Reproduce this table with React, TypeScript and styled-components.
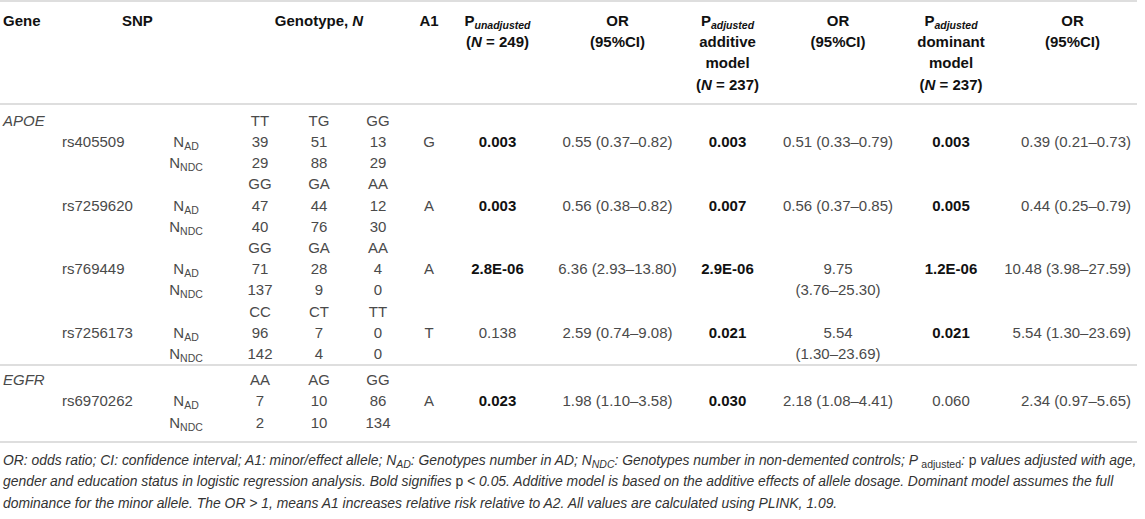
import { Fragment } from "react";
import { createGlobalStyle, styled } from "styled-components";

interface PValue {
  value: string;
  bold: boolean;
}

interface Block {
  gene?: string;
  snp: string;
  genotypes: [string, string, string];
  ad: [string, string, string];
  ndc: [string, string, string];
  a1: string;
  pUnadjusted: PValue;
  orUnadjusted: string;
  pAdditive: PValue;
  orAdditive: string[];
  pDominant: PValue;
  orDominant: string;
}

const GROUPS: Block[][] = [
  [
    {
      gene: "APOE",
      snp: "rs405509",
      genotypes: ["TT", "TG", "GG"],
      ad: ["39", "51", "13"],
      ndc: ["29", "88", "29"],
      a1: "G",
      pUnadjusted: { value: "0.003", bold: true },
      orUnadjusted: "0.55 (0.37–0.82)",
      pAdditive: { value: "0.003", bold: true },
      orAdditive: ["0.51 (0.33–0.79)"],
      pDominant: { value: "0.003", bold: true },
      orDominant: "0.39 (0.21–0.73)",
    },
    {
      snp: "rs7259620",
      genotypes: ["GG", "GA", "AA"],
      ad: ["47", "44", "12"],
      ndc: ["40", "76", "30"],
      a1: "A",
      pUnadjusted: { value: "0.003", bold: true },
      orUnadjusted: "0.56 (0.38–0.82)",
      pAdditive: { value: "0.007", bold: true },
      orAdditive: ["0.56 (0.37–0.85)"],
      pDominant: { value: "0.005", bold: true },
      orDominant: "0.44 (0.25–0.79)",
    },
    {
      snp: "rs769449",
      genotypes: ["GG", "GA", "AA"],
      ad: ["71", "28", "4"],
      ndc: ["137", "9", "0"],
      a1: "A",
      pUnadjusted: { value: "2.8E-06", bold: true },
      orUnadjusted: "6.36 (2.93–13.80)",
      pAdditive: { value: "2.9E-06", bold: true },
      orAdditive: ["9.75", "(3.76–25.30)"],
      pDominant: { value: "1.2E-06", bold: true },
      orDominant: "10.48 (3.98–27.59)",
    },
    {
      snp: "rs7256173",
      genotypes: ["CC", "CT", "TT"],
      ad: ["96", "7", "0"],
      ndc: ["142", "4", "0"],
      a1: "T",
      pUnadjusted: { value: "0.138", bold: false },
      orUnadjusted: "2.59 (0.74–9.08)",
      pAdditive: { value: "0.021", bold: true },
      orAdditive: ["5.54", "(1.30–23.69)"],
      pDominant: { value: "0.021", bold: true },
      orDominant: "5.54 (1.30–23.69)",
    },
  ],
  [
    {
      gene: "EGFR",
      snp: "rs6970262",
      genotypes: ["AA", "AG", "GG"],
      ad: ["7", "10", "86"],
      ndc: ["2", "10", "134"],
      a1: "A",
      pUnadjusted: { value: "0.023", bold: true },
      orUnadjusted: "1.98 (1.10–3.58)",
      pAdditive: { value: "0.030", bold: true },
      orAdditive: ["2.18 (1.08–4.41)"],
      pDominant: { value: "0.060", bold: false },
      orDominant: "2.34 (0.97–5.65)",
    },
  ],
];

const COLUMNS = [58, 84, 88, 60, 58, 60, 42, 95, 145, 75, 146, 80, 146];

const GlobalStyle = createGlobalStyle`
  body {
    margin: 0;
    background: #ffffff;
  }
`;

const Page = styled.div`
  width: 1145px;
  font-family: "Liberation Sans", Arial, Helvetica, sans-serif;
  color: #4a4a4a;
`;

const Table = styled.table`
  width: 1137px;
  border-collapse: collapse;
  table-layout: fixed;
  font-size: 15px;
  line-height: 21.2px;
  border-top: 2px solid #dedede;
  border-bottom: 2px solid #dedede;
`;

const Col = styled.col<{ $width: number }>`
  width: ${(p) => p.$width}px;
`;

const Head = styled.thead`
  border-bottom: 2px solid #dedede;
`;

const HeadCell = styled.th<{ $align?: string; $indent?: number }>`
  padding: 8px 3px 8px ${(p) => p.$indent ?? 3}px;
  text-align: ${(p) => p.$align ?? "center"};
  vertical-align: top;
  font-weight: 700;
  color: #111111;
  white-space: nowrap;
`;

const Group = styled.tbody<{ $top: number; $bottom: number }>`
  border-top: 2px solid #dedede;

  & > tr:first-child > td {
    padding-top: ${(p) => p.$top}px;
  }

  & > tr:last-child > td {
    padding-bottom: ${(p) => p.$bottom}px;
  }
`;

const Cell = styled.td<{
  $align?: string;
  $bold?: boolean;
  $italic?: boolean;
  $left?: number;
  $right?: number;
}>`
  padding: 0 ${(p) => p.$right ?? 3}px 0 ${(p) => p.$left ?? 3}px;
  text-align: ${(p) => p.$align ?? "center"};
  vertical-align: top;
  white-space: nowrap;
  font-weight: ${(p) => (p.$bold ? 700 : 400)};
  font-style: ${(p) => (p.$italic ? "italic" : "normal")};
  color: ${(p) => (p.$bold ? "#111111" : "inherit")};
`;

const Sub = styled.sub<{ $upright?: boolean }>`
  font-size: 10.5px;
  line-height: 0;
  vertical-align: -3px;
  font-style: ${(p) => (p.$upright ? "normal" : "inherit")};
`;

const Note = styled.p`
  margin: 7px 0 0;
  padding-left: 3px;
  font-size: 13.9px;
  line-height: 21.5px;
  font-style: italic;
  color: #333333;
  white-space: nowrap;
`;

const Upright = styled.span`
  font-style: normal;
`;

function SnpBlock({ block }: { block: Block }) {
  const value = (p: PValue) => (
    <Cell rowSpan={2} $bold={p.bold}>
      {p.value}
    </Cell>
  );

  return (
    <Fragment>
      <tr>
        <Cell $align="left" $italic>
          {block.gene}
        </Cell>
        <Cell />
        <Cell />
        {block.genotypes.map((g, i) => (
          <Cell key={i}>{g}</Cell>
        ))}
        <Cell colSpan={7} />
      </tr>
      <tr>
        <Cell />
        <Cell $align="left" $left={4}>
          {block.snp}
        </Cell>
        <Cell>
          N<Sub>AD</Sub>
        </Cell>
        {block.ad.map((n, i) => (
          <Cell key={i}>{n}</Cell>
        ))}
        <Cell rowSpan={2}>{block.a1}</Cell>
        {value(block.pUnadjusted)}
        <Cell rowSpan={2}>{block.orUnadjusted}</Cell>
        {value(block.pAdditive)}
        <Cell rowSpan={2}>
          {block.orAdditive.map((line, i) => (
            <div key={i}>{line}</div>
          ))}
        </Cell>
        {value(block.pDominant)}
        <Cell rowSpan={2} $align="right" $right={6}>
          {block.orDominant}
        </Cell>
      </tr>
      <tr>
        <Cell />
        <Cell />
        <Cell>
          N<Sub>NDC</Sub>
        </Cell>
        {block.ndc.map((n, i) => (
          <Cell key={i}>{n}</Cell>
        ))}
      </tr>
    </Fragment>
  );
}

export default function App() {
  return (
    <Page>
      <GlobalStyle />
      <Table>
        <colgroup>
          {COLUMNS.map((w, i) => (
            <Col key={i} $width={w} />
          ))}
        </colgroup>
        <Head>
          <tr>
            <HeadCell $align="left">Gene</HeadCell>
            <HeadCell colSpan={2} $align="left" $indent={64}>
              SNP
            </HeadCell>
            <HeadCell colSpan={3}>
              Genotype, <i>N</i>
            </HeadCell>
            <HeadCell>A1</HeadCell>
            <HeadCell>
              P<Sub>
                <i>unadjusted</i>
              </Sub>
              <br />(<i>N</i> = 249)
            </HeadCell>
            <HeadCell>
              OR
              <br />
              (95%CI)
            </HeadCell>
            <HeadCell>
              P<Sub>
                <i>adjusted</i>
              </Sub>
              <br />
              additive
              <br />
              model
              <br />(<i>N</i> = 237)
            </HeadCell>
            <HeadCell>
              OR
              <br />
              (95%CI)
            </HeadCell>
            <HeadCell>
              P<Sub>
                <i>adjusted</i>
              </Sub>
              <br />
              dominant
              <br />
              model
              <br />(<i>N</i> = 237)
            </HeadCell>
            <HeadCell $indent={20}>
              OR
              <br />
              (95%CI)
            </HeadCell>
          </tr>
        </Head>
        {GROUPS.map((group, gi) => (
          <Group key={gi} $top={gi === 0 ? 5 : 3} $bottom={gi === 0 ? 0 : 8}>
            {group.map((block) => (
              <SnpBlock key={block.snp} block={block} />
            ))}
          </Group>
        ))}
      </Table>
      <Note>
        OR: odds ratio; CI: confidence interval; A1: minor/effect allele; N<Sub>AD</Sub>: Genotypes
        number in AD; N<Sub>NDC</Sub>: Genotypes number in non-demented controls; P{" "}
        <Sub $upright>adjusted</Sub>: <Upright>p</Upright> values adjusted with age,
        <br />
        gender and education status in logistic regression analysis. Bold signifies{" "}
        <Upright>p</Upright> &lt; 0.05. Additive model is based on the additive effects of allele
        dosage. Dominant model assumes the full
        <br />
        dominance for the minor allele. The OR &gt; 1, means A1 increases relative risk relative to
        A2. All values are calculated using PLINK, 1.09.
      </Note>
    </Page>
  );
}
